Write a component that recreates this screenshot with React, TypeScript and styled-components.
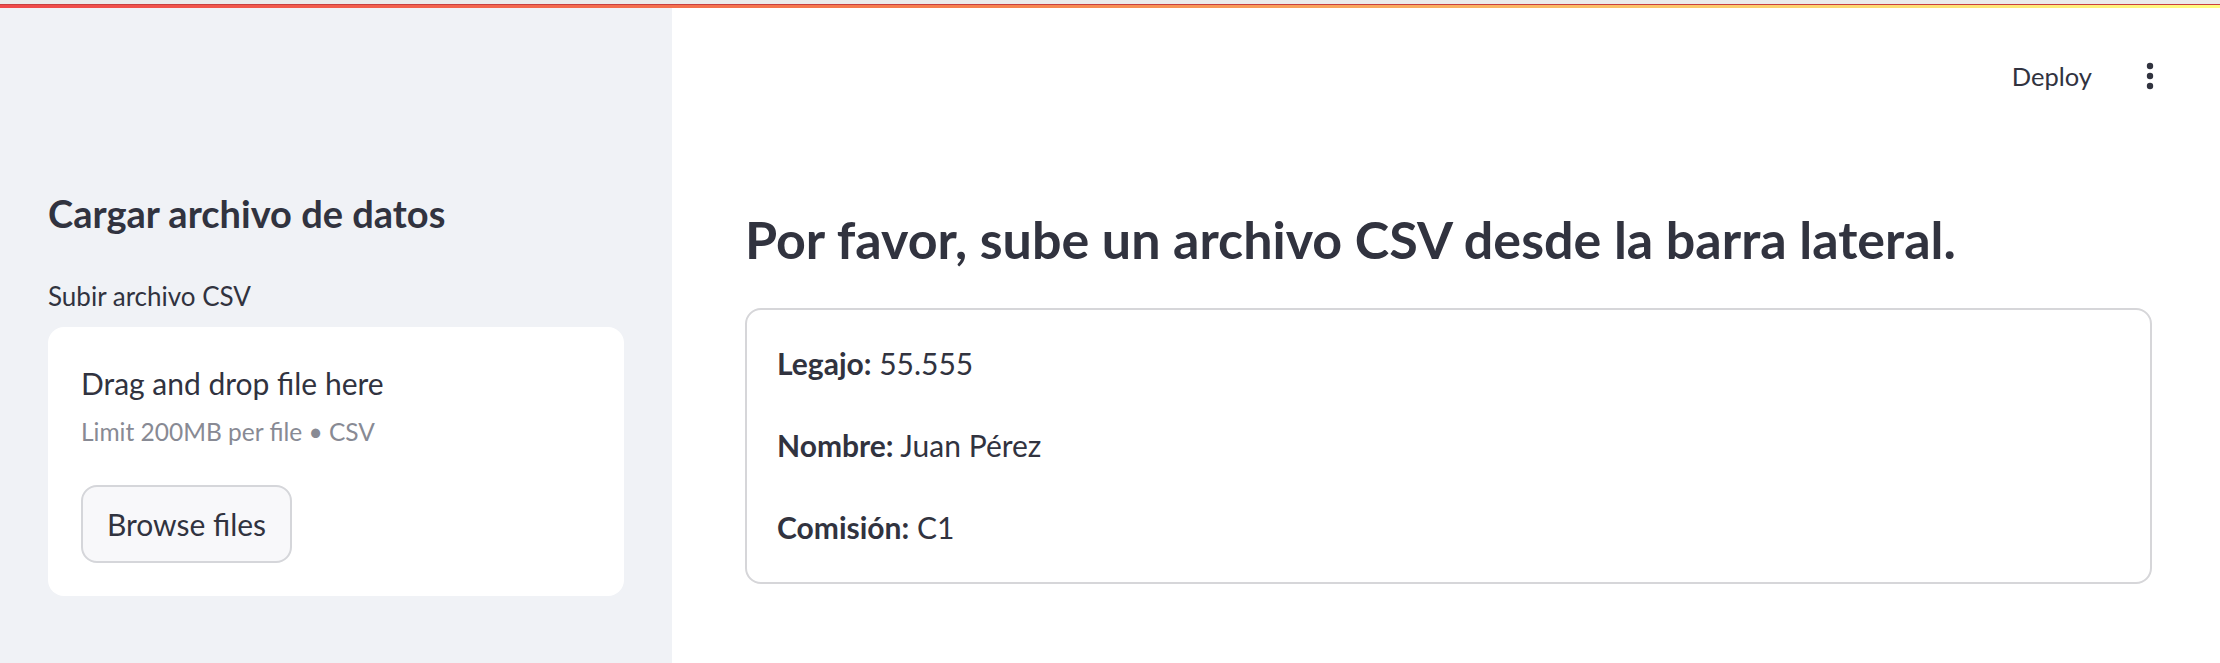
import React from "react";
import styled, { createGlobalStyle } from "styled-components";

const GlobalStyle = createGlobalStyle`
  html, body { margin: 0; padding: 0; }
  body { font-family: Lato, "Noto Sans", sans-serif; color: #31333f; background: #ffffff; }
  * { box-sizing: border-box; }
`;

const Page = styled.div`
  height: 100vh;
  display: flex;
  flex-direction: column;
  overflow: hidden;
`;

const ChromeStrip = styled.div`
  height: 4px;
  background: #ebebeb;
  flex-shrink: 0;
`;

const Decoration = styled.div`
  height: 4px;
  flex-shrink: 0;
  background: linear-gradient(90deg, #f04a4a 0%, #f6834f 45%, #fffd80 100%);
  border-top: 1px solid #c94040;
`;

const Body = styled.div`
  flex: 1;
  display: flex;
  min-height: 0;
`;

const Sidebar = styled.aside`
  width: 672px;
  flex-shrink: 0;
  background: #f0f2f6;
  padding: 181px 48px 0 48px;
  display: flex;
  flex-direction: column;
`;

const SideHeading = styled.h3`
  margin: 0;
  font-size: 38px;
  line-height: 48px;
  font-weight: 700;
  color: #31333f;
`;

const FieldLabel = styled.label`
  margin-top: 37px;
  font-size: 26px;
  line-height: 45px;
  color: #31333f;
`;

const Dropzone = styled.section`
  margin-top: 8px;
  background: #ffffff;
  border-radius: 16px;
  padding: 32px 32px 33px 33px;
  display: flex;
  flex-direction: column;
  align-items: flex-start;
`;

const DropTitle = styled.span`
  font-size: 30px;
  line-height: 49px;
  color: #31333f;
`;

const DropHint = styled.small`
  font-size: 24.5px;
  line-height: 48px;
  color: #888a94;
`;

const BrowseButton = styled.button`
  margin-top: 29px;
  width: 211px;
  height: 78px;
  border: 2px solid #d5d6da;
  border-radius: 16px;
  background: #f8f8fa;
  font-family: inherit;
  font-size: 30px;
  color: #31333f;
  padding: 0;
`;

const Main = styled.main`
  flex: 1;
  display: flex;
  flex-direction: column;
`;

const Header = styled.header`
  height: 136px;
  display: flex;
  justify-content: flex-end;
  align-items: center;
  gap: 52px;
  padding-right: 64px;
`;

const DeployText = styled.span`
  font-size: 25.5px;
  color: #31333f;
`;

const Content = styled.div`
  padding: 62px 68px 0 73px;
  display: flex;
  flex-direction: column;
`;

const MainHeading = styled.h2`
  margin: 0;
  font-size: 52px;
  line-height: 67px;
  font-weight: 700;
  color: #31333f;
`;

const InfoCard = styled.div`
  margin-top: 35px;
  border: 2px solid #d6d6d9;
  border-radius: 16px;
  padding: 28px 30px 29px 30px;
  display: flex;
  flex-direction: column;
  gap: 31px;
`;

const InfoLine = styled.p`
  margin: 0;
  font-size: 30px;
  line-height: 51px;
  color: #31333f;
  strong { font-weight: 700; }
`;

function DotsIcon() {
  return (
    <svg width="12" height="28" viewBox="0 0 12 28" aria-hidden="true">
      <circle cx="6" cy="4" r="3.2" fill="#31333f" />
      <circle cx="6" cy="14" r="3.2" fill="#31333f" />
      <circle cx="6" cy="24" r="3.2" fill="#31333f" />
    </svg>
  );
}

export default function App() {
  return (
    <Page>
      <GlobalStyle />
      <ChromeStrip />
      <Decoration />
      <Body>
        <Sidebar>
          <SideHeading>Cargar archivo de datos</SideHeading>
          <FieldLabel>Subir archivo CSV</FieldLabel>
          <Dropzone>
            <DropTitle>Drag and drop file here</DropTitle>
            <DropHint>Limit 200MB per file • CSV</DropHint>
            <BrowseButton>Browse files</BrowseButton>
          </Dropzone>
        </Sidebar>
        <Main>
          <Header>
            <DeployText>Deploy</DeployText>
            <DotsIcon />
          </Header>
          <Content>
            <MainHeading>Por favor, sube un archivo CSV desde la barra lateral.</MainHeading>
            <InfoCard>
              <InfoLine><strong>Legajo:</strong> 55.555</InfoLine>
              <InfoLine><strong>Nombre:</strong> Juan Pérez</InfoLine>
              <InfoLine><strong>Comisión:</strong> C1</InfoLine>
            </InfoCard>
          </Content>
        </Main>
      </Body>
    </Page>
  );
}
